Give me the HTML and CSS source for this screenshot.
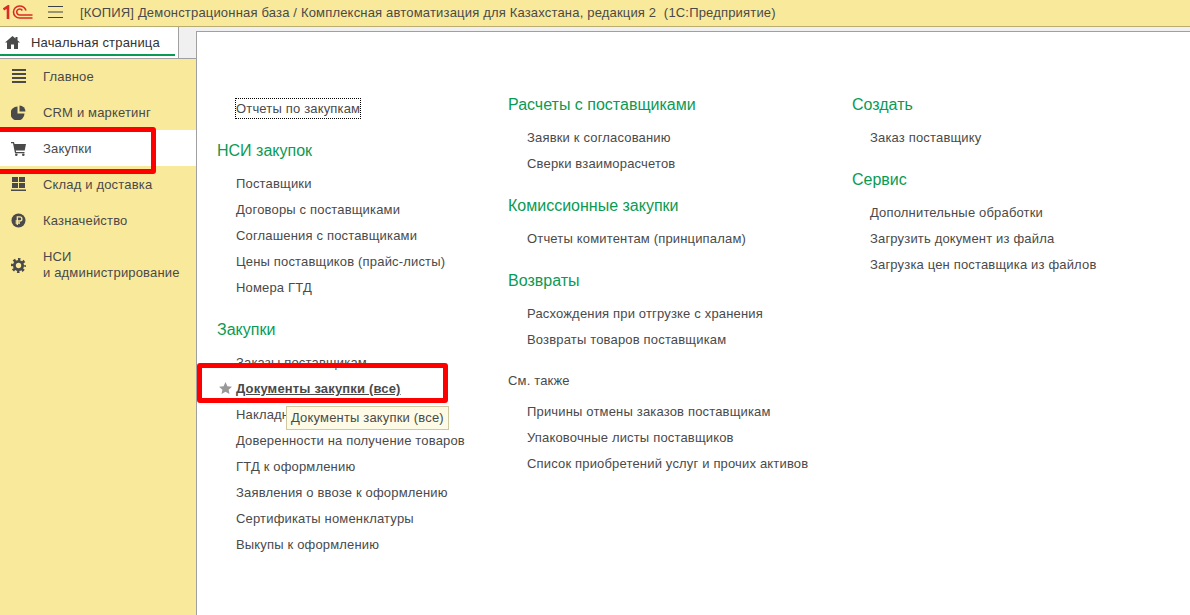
FILE: index.html
```html
<!DOCTYPE html>
<html lang="ru">
<head>
<meta charset="utf-8">
<title>1С:Предприятие</title>
<link rel="stylesheet" href="styles.css">
</head>
<body>
<header class="topbar">
  <svg class="logo" width="30" height="14" viewBox="0 0 30 14" fill="none" stroke="#dc2b25">
    <path d="M0.500 4.500 5 1.500V14" stroke-width="2.600"/>
    <path d="M29.500 13H16.500A6 6 0 1 1 16.500 1C20 1 22 2.800 23 5.500" stroke-width="1.600"/>
    <path d="M29.500 10H16.500A3 3 0 1 1 19.300 5.500" stroke-width="1.600"/>
  </svg>
  <svg class="burger" width="15" height="12" viewBox="0 0 15 12" stroke="#3c4048" stroke-width="1"><path d="M0 0.500H15M0 6H15M0 11.500H15"/></svg>
  <span class="title">[КОПИЯ] Демонстрационная база / Комплексная автоматизация для Казахстана, редакция 2&nbsp; (1С:Предприятие)</span>
</header>
<div class="workspace">
  <aside class="side">
    <div class="home-tab">
      <svg width="15" height="13" viewBox="0 0 15 13" fill="#4a4a4a"><path d="M7.500 0 10.500 2.600V1H12.500V4.300L15 6.500H13V13H9V8.500H6V13H2V6.500H0Z"/></svg>
      <span>Начальная страница</span>
    </div>
    <nav class="menu">
      <div class="menu-item">
        <svg width="15" height="14" viewBox="0 0 15 14" fill="#4a4a4a"><path d="M1 0H15V2H1ZM1 4H15V6H1ZM1 8H15V10H1ZM1 12H15V14H1Z"/></svg>
        <span>Главное</span>
      </div>
      <div class="menu-item">
        <svg width="15" height="15" viewBox="0 0 15 15" fill="#4a4a4a"><path d="M6.500 1.500V8.500H13.500A7 7 0 1 1 6.500 1.500Z"/><path d="M8.500 0.500A6 6 0 0 1 14.500 6.500H8.500Z"/></svg>
        <span>CRM и маркетинг</span>
      </div>
      <div class="menu-item active">
        <svg width="15" height="15" viewBox="0 0 15 15" fill="#4a4a4a"><path d="M0 1H3L3.500 3H15L13.700 9.500H4.800L5.100 11H13.500V12.300H4L2 2.300H0Z"/><circle cx="5.300" cy="13.700" r="1.300"/><circle cx="12.300" cy="13.700" r="1.300"/></svg>
        <span>Закупки</span>
      </div>
      <div class="menu-item">
        <svg width="15" height="14" viewBox="0 0 15 14" fill="#4a4a4a"><path d="M1 0H7V5H1ZM8 0H14V5H8ZM1 6H7V11H1ZM8 6H14V11H8ZM0 12.500H15V14H0Z"/></svg>
        <span>Склад и доставка</span>
      </div>
      <div class="menu-item">
        <svg width="15" height="15" viewBox="0 0 15 15"><circle cx="7.500" cy="7.500" r="7" fill="#4a4a4a"/><path d="M6.300 12V3.800H8.800A2 2 0 0 1 8.800 8H4.600M4.600 10H9" fill="none" stroke="#f9e99b" stroke-width="1.300"/></svg>
        <span>Казначейство</span>
      </div>
      <div class="menu-item tall">
        <svg width="15" height="15" viewBox="0 0 16 16" fill="none" stroke="#4a4a4a"><circle cx="8" cy="8" r="4.400" stroke-width="3"/><circle cx="8" cy="8" r="6.500" stroke-width="3" stroke-dasharray="2.550 2.550" stroke-dashoffset="1.280"/></svg>
        <span>НСИ<br>и администрирование</span>
      </div>
    </nav>
  </aside>
  <main class="panel">
    <section class="col col-one">
      <a class="link focused"><span>Отчеты по закупкам</span></a>
      <h2>НСИ закупок</h2>
      <a class="link">Поставщики</a>
      <a class="link">Договоры с поставщиками</a>
      <a class="link">Соглашения с поставщиками</a>
      <a class="link">Цены поставщиков (прайс-листы)</a>
      <a class="link">Номера ГТД</a>
      <h2>Закупки</h2>
      <a class="link">Заказы поставщикам</a>
      <a class="link hovered">
        <svg class="star" width="13" height="12" viewBox="0 0 13 12" fill="#999"><path d="M6.500 0 8.400 4.200 13 4.700 9.600 7.700 10.500 12 6.500 9.800 2.500 12 3.400 7.700 0 4.700 4.600 4.200Z"/></svg>
        Документы закупки (все)
        <span class="tooltip">Документы закупки (все)</span>
      </a>
      <a class="link">Накладные</a>
      <a class="link">Доверенности на получение товаров</a>
      <a class="link">ГТД к оформлению</a>
      <a class="link">Заявления о ввозе к оформлению</a>
      <a class="link">Сертификаты номенклатуры</a>
      <a class="link">Выкупы к оформлению</a>
    </section>
    <section class="col col-two">
      <h2>Расчеты с поставщиками</h2>
      <a class="link">Заявки к согласованию</a>
      <a class="link">Сверки взаиморасчетов</a>
      <h2>Комиссионные закупки</h2>
      <a class="link">Отчеты комитентам (принципалам)</a>
      <h2>Возвраты</h2>
      <a class="link">Расхождения при отгрузке с хранения</a>
      <a class="link">Возвраты товаров поставщикам</a>
      <h3>См. также</h3>
      <a class="link">Причины отмены заказов поставщикам</a>
      <a class="link">Упаковочные листы поставщиков</a>
      <a class="link">Список приобретений услуг и прочих активов</a>
    </section>
    <section class="col col-three">
      <h2>Создать</h2>
      <a class="link">Заказ поставщику</a>
      <h2>Сервис</h2>
      <a class="link">Дополнительные обработки</a>
      <a class="link">Загрузить документ из файла</a>
      <a class="link">Загрузка цен поставщика из файлов</a>
    </section>
    <div class="mark mark-docs"></div>
  </main>
  <div class="mark mark-menu"></div>
</div>
</body>
</html>
```
FILE: styles.css
```css
* { box-sizing: border-box; }
html, body { height: 100%; }
body {
  margin: 0;
  overflow: hidden;
  display: flex;
  flex-direction: column;
  background: #f0f0f0;
  font-family: "Liberation Sans", Arial, sans-serif;
  font-size: 13px;
  letter-spacing: 0.17px;
  color: #4a4a4a;
}
.topbar {
  height: 27px;
  display: flex;
  align-items: center;
  flex: none;
  padding: 0 0 2px 3px;
  background: #f9e99b;
  border-bottom: 1px solid #b8ac70;
}
.logo { flex: none; }
.burger { flex: none; margin-left: 15px; }
.title { margin-left: 17px; white-space: nowrap; letter-spacing: 0.18px; }
.workspace { flex: 1; display: flex; position: relative; min-height: 0; }
.side { width: 196px; flex: none; display: flex; flex-direction: column; }
.home-tab {
  width: 179px;
  height: 31px;
  padding-left: 5px;
  display: flex;
  align-items: center;
  gap: 11px;
  background: #fff;
  border-right: 1px solid #a0a0a0;
  position: relative;
  z-index: 1;
  color: #333;
}
.home-tab::after {
  content: "";
  position: absolute;
  left: 0;
  right: 3px;
  bottom: 2px;
  height: 2px;
  background: #0a9a54;
}
.menu {
  flex: 1;
  display: flex;
  flex-direction: column;
  background: #f9e99b;
  border-top: 1px solid #a0a0a0;
}
.menu-item {
  height: 36px;
  display: flex;
  align-items: center;
  padding-left: 11px;
  gap: 17px;
}
.menu-item:first-child { margin-top: -1px; }
.menu-item svg { flex: none; }
.menu-item.active { background: #fff; }
.menu-item.tall { height: 54px; line-height: 16px; }
.panel {
  flex: 1;
  margin-top: 4px;
  display: flex;
  position: relative;
  background: #fff;
  border-top: 1px solid #a0a0a0;
  border-left: 1px solid #a0a0a0;
  padding-top: 61px;
}
.col { display: flex; flex-direction: column; }
.col-one { width: 291px; margin-left: 20px; padding-top: 3px; }
.col-two { width: 344px; }
.col-three { width: 300px; }
.col-three .link { padding-left: 18px; }
h2 {
  margin: 17px 0 8px;
  height: 24px;
  line-height: 24px;
  font-size: 16px;
  font-weight: 400;
  letter-spacing: 0;
  color: #0a9a54;
  white-space: nowrap;
}
.col > h2:first-child { margin-top: 0; }
h3 {
  margin: 20px 0 10px;
  height: 16px;
  line-height: 16px;
  font-size: 13px;
  font-weight: 400;
  color: #4a4a4a;
}
.link {
  height: 26px;
  line-height: 26px;
  padding-left: 19px;
  white-space: nowrap;
  position: relative;
  display: block;
}
.focused span { outline: 1px dotted #000; padding: 2px 0; }
.hovered { font-weight: 700; text-decoration: underline; }
.star { position: absolute; left: 2px; top: 6px; }
.tooltip {
  position: absolute;
  left: 69px;
  top: 30px;
  height: 24px;
  line-height: 22px;
  padding: 0 4px;
  background: #fdfbe6;
  border: 1px solid #cfc8a0;
  font-weight: 400;
  display: inline-block;
  text-decoration: none;
  z-index: 2;
}
.mark {
  position: absolute;
  border: 5px solid #f00;
  border-radius: 3px;
  pointer-events: none;
  z-index: 3;
}
.mark-menu { left: -6px; top: 100px; width: 162px; height: 47px; }
.mark-docs { left: 0; top: 331px; width: 251px; height: 40px; }
```
